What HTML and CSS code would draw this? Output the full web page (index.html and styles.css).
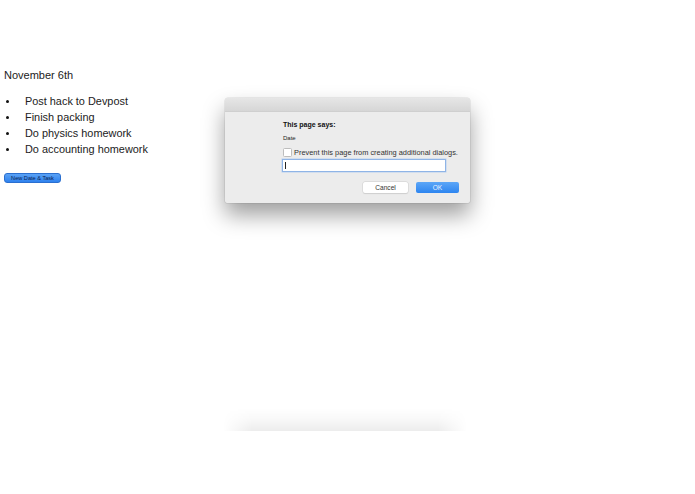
FILE: index.html
```html
<!DOCTYPE html>
<html>
<head>
<meta charset="utf-8">
<link rel="stylesheet" href="styles.css">
</head>
<body>
<div class="page">
  <h1 class="date">November 6th</h1>
  <ul class="tasks">
    <li>Post hack to Devpost</li>
    <li>Finish packing</li>
    <li>Do physics homework</li>
    <li>Do accounting homework</li>
  </ul>
  <button class="new-btn">New Date &amp; Task</button>
</div>

<div class="dialog">
  <div class="titlebar"></div>
  <div class="dialog-body">
    <div class="says">This page says:</div>
    <div class="msg">Date</div>
    <label class="prevent"><span class="check"></span>Prevent this page from creating additional dialogs.</label>
    <div class="input"><span class="caret"></span></div>
    <div class="actions">
      <span class="btn cancel">Cancel</span>
      <span class="btn ok">OK</span>
    </div>
  </div>
</div>

<div class="bottom-shadow"></div>
</body>
</html>
```

FILE: styles.css
```css
html, body {
  margin: 0;
  padding: 0;
  background: #ffffff;
}
body {
  width: 695px;
  height: 494px;
  overflow: hidden;
  position: relative;
  font-family: "Liberation Sans", Arial, sans-serif;
  color: #222;
}
.page {
  padding: 68px 0 0 4px;
}
.date {
  margin: 0;
  font-size: 11px;
  font-weight: normal;
  line-height: 14px;
  color: #222;
}
.tasks {
  list-style: none;
  margin: 11px 0 0 0;
  padding: 0 0 0 21px;
  font-size: 10.9px;
  line-height: 16px;
  color: #222;
}
.tasks li {
  position: relative;
}
.tasks li::before {
  content: "";
  position: absolute;
  left: -19px;
  top: 7px;
  width: 3px;
  height: 3px;
  border-radius: 50%;
  background: #111;
}
.new-btn {
  display: block;
  margin-top: 16px;
  width: 57px;
  height: 10px;
  padding: 0;
  border: 1px solid #2a6fd0;
  border-radius: 3px;
  background: linear-gradient(#5aa2f5, #2f82ee);
  color: #0b2350;
  font-family: "Liberation Sans", Arial, sans-serif;
  font-size: 5.6px;
  line-height: 8px;
  text-align: center;
}
.dialog {
  position: absolute;
  left: 225px;
  top: 98px;
  width: 245px;
  height: 105px;
  border-radius: 3px 3px 2px 2px;
  background: #ececec;
  box-shadow: 0 12px 22px rgba(0, 0, 0, 0.38), 0 0 0 0.5px rgba(0, 0, 0, 0.12);
  overflow: hidden;
}
.titlebar {
  height: 13px;
  background: linear-gradient(#e6e6e6, #d6d6d6);
  border-bottom: 1px solid #cfcfcf;
}
.dialog-body {
  padding: 8px 0 0 57px;
  position: relative;
}
.says {
  font-size: 7px;
  font-weight: bold;
  line-height: 10px;
  color: #111;
  padding-left: 1px;
}
.msg {
  font-size: 6px;
  line-height: 8px;
  margin-top: 4px;
  padding-left: 1px;
  color: #222;
}
.prevent {
  display: flex;
  align-items: center;
  margin-top: 6px;
  font-size: 7.4px;
  line-height: 9px;
  color: #333;
  padding-left: 1px;
}
.check {
  display: inline-block;
  width: 7px;
  height: 7px;
  background: #fff;
  border: 0.5px solid #bdbdbd;
  border-radius: 1.5px;
  margin-right: 2px;
}
.input {
  margin-top: 2px;
  width: 162px;
  height: 11px;
  background: #fff;
  border: 1px solid #8fb4e6;
  box-shadow: 0 0 0 0.5px #b8d0f0;
  position: relative;
}
.caret {
  position: absolute;
  left: 2px;
  top: 2px;
  width: 1px;
  height: 7px;
  background: #222;
}
.actions {
  display: flex;
  justify-content: flex-end;
  gap: 8px;
  margin-top: 10px;
  padding-right: 11px;
}
.btn {
  display: block;
  height: 11px;
  font-size: 6.6px;
  line-height: 11px;
  text-align: center;
  border-radius: 2px;
}
.cancel {
  width: 45px;
  background: #fff;
  color: #333;
  box-shadow: 0 0 0 0.5px #d0d0d0, 0 0.5px 1px rgba(0,0,0,0.12);
}
.ok {
  width: 43px;
  background: linear-gradient(#5ca6f7, #2d85f0);
  color: #eaf3ff;
}
.bottom-shadow {
  position: absolute;
  left: 223px;
  top: 408px;
  width: 244px;
  height: 23px;
  background: linear-gradient(rgba(0,0,0,0), rgba(0,0,0,0.02) 40%, rgba(0,0,0,0.075));
  -webkit-mask-image: linear-gradient(to right, transparent, #000 12%, #000 88%, transparent);
  mask-image: linear-gradient(to right, transparent, #000 12%, #000 88%, transparent);
}
```
